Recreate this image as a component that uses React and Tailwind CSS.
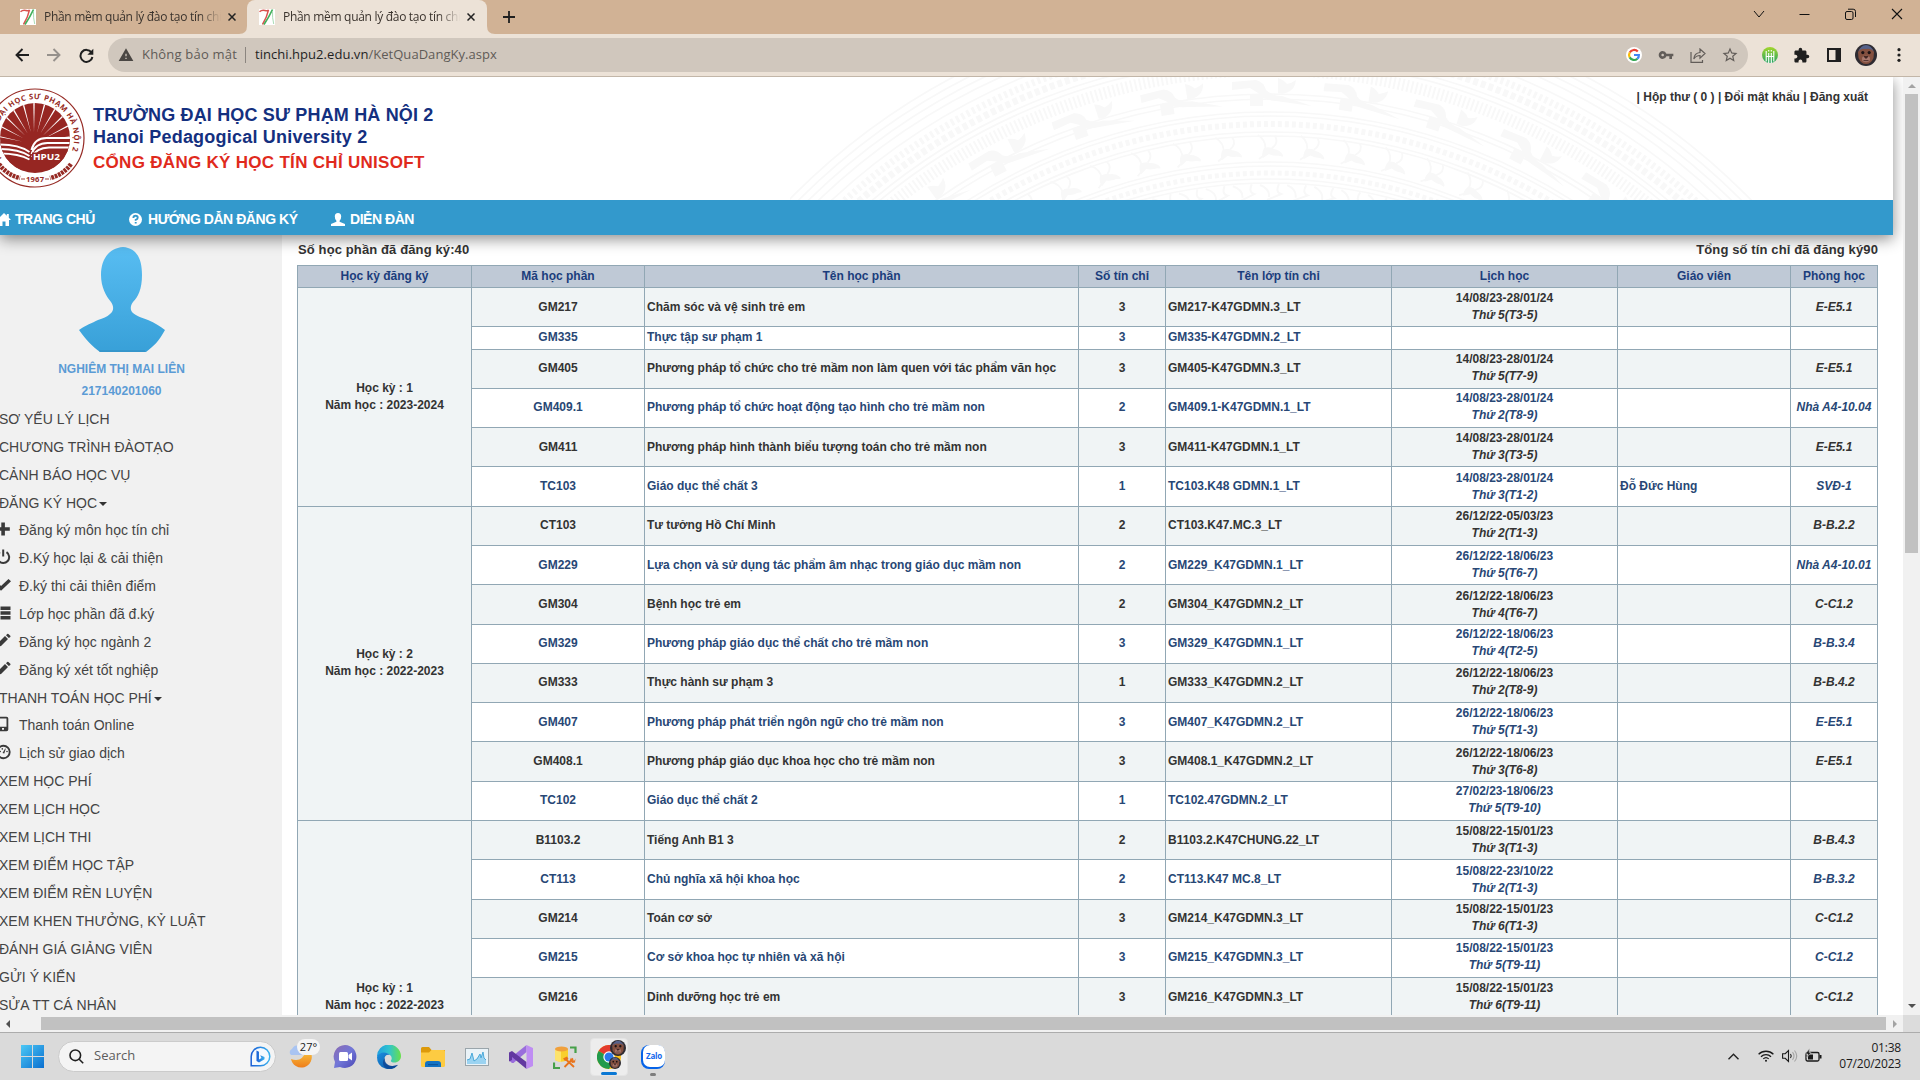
import React from "react";
import { MdExtension, MdVpnKey, MdStarBorder, MdWarning } from "react-icons/md";

const ROWS = [
  { term: ["Học kỳ : 1", "Năm học : 2023-2024"], span: 6, h: 39, code: "GM217", name: "Chăm sóc và vệ sinh trẻ em", cr: 3, cls: "GM217-K47GDMN.3_LT", d: "14/08/23-28/01/24", t: "Thứ 5(T3-5)", room: "E-E5.1" },
  { up: true, h: 23, code: "GM335", name: "Thực tập sư phạm 1", cr: 3, cls: "GM335-K47GDMN.2_LT" },
  { up: true, h: 39, code: "GM405", name: "Phương pháp tổ chức cho trẻ mầm non làm quen với tác phẩm văn học", cr: 3, cls: "GM405-K47GDMN.3_LT", d: "14/08/23-28/01/24", t: "Thứ 5(T7-9)", room: "E-E5.1" },
  { up: true, h: 39, code: "GM409.1", name: "Phương pháp tổ chức hoạt động tạo hình cho trẻ mầm non", cr: 2, cls: "GM409.1-K47GDMN.1_LT", d: "14/08/23-28/01/24", t: "Thứ 2(T8-9)", room: "Nhà A4-10.04" },
  { h: 39, code: "GM411", name: "Phương pháp hình thành biểu tượng toán cho trẻ mầm non", cr: 3, cls: "GM411-K47GDMN.1_LT", d: "14/08/23-28/01/24", t: "Thứ 3(T3-5)", room: "E-E5.1" },
  { h: 40, code: "TC103", name: "Giáo dục thể chất 3", cr: 1, cls: "TC103.K48 GDMN.1_LT", d: "14/08/23-28/01/24", t: "Thứ 3(T1-2)", teacher: "Đỗ Đức Hùng", room: "SVĐ-1" },
  { up: true, term: ["Học kỳ : 2", "Năm học : 2022-2023"], span: 8, h: 39, code: "CT103", name: "Tư tưởng Hồ Chí Minh", cr: 2, cls: "CT103.K47.MC.3_LT", d: "26/12/22-05/03/23", t: "Thứ 2(T1-3)", room: "B-B.2.2" },
  { h: 39, code: "GM229", name: "Lựa chọn và sử dụng tác phẩm âm nhạc trong giáo dục mầm non", cr: 2, cls: "GM229_K47GDMN.1_LT", d: "26/12/22-18/06/23", t: "Thứ 5(T6-7)", room: "Nhà A4-10.01" },
  { h: 40, code: "GM304", name: "Bệnh học trẻ em", cr: 2, cls: "GM304_K47GDMN.2_LT", d: "26/12/22-18/06/23", t: "Thứ 4(T6-7)", room: "C-C1.2" },
  { up: true, h: 39, code: "GM329", name: "Phương pháp giáo dục thể chất cho trẻ mầm non", cr: 3, cls: "GM329_K47GDMN.1_LT", d: "26/12/22-18/06/23", t: "Thứ 4(T2-5)", room: "B-B.3.4" },
  { up: true, h: 39, code: "GM333", name: "Thực hành sư phạm 3", cr: 1, cls: "GM333_K47GDMN.2_LT", d: "26/12/22-18/06/23", t: "Thứ 2(T8-9)", room: "B-B.4.2" },
  { h: 39, code: "GM407", name: "Phương pháp phát triển ngôn ngữ cho trẻ mầm non", cr: 3, cls: "GM407_K47GDMN.2_LT", d: "26/12/22-18/06/23", t: "Thứ 5(T1-3)", room: "E-E5.1" },
  { h: 40, code: "GM408.1", name: "Phương pháp giáo dục khoa học cho trẻ mầm non", cr: 3, cls: "GM408.1_K47GDMN.2_LT", d: "26/12/22-18/06/23", t: "Thứ 3(T6-8)", room: "E-E5.1" },
  { up: true, h: 39, code: "TC102", name: "Giáo dục thể chất 2", cr: 1, cls: "TC102.47GDMN.2_LT", d: "27/02/23-18/06/23", t: "Thứ 5(T9-10)" },
  { term: ["Học kỳ : 1", "Năm học : 2022-2023"], span: 6, h: 39, code: "B1103.2", name: "Tiếng Anh B1 3", cr: 2, cls: "B1103.2.K47CHUNG.22_LT", d: "15/08/22-15/01/23", t: "Thứ 3(T1-3)", room: "B-B.4.3" },
  { h: 40, code: "CT113", name: "Chủ nghĩa xã hội khoa học", cr: 2, cls: "CT113.K47 MC.8_LT", d: "15/08/22-23/10/22", t: "Thứ 2(T1-3)", room: "B-B.3.2" },
  { up: true, h: 39, code: "GM214", name: "Toán cơ sở", cr: 3, cls: "GM214_K47GDMN.3_LT", d: "15/08/22-15/01/23", t: "Thứ 6(T1-3)", room: "C-C1.2" },
  { up: true, h: 39, code: "GM215", name: "Cơ sở khoa học tự nhiên và xã hội", cr: 3, cls: "GM215_K47GDMN.3_LT", d: "15/08/22-15/01/23", t: "Thứ 5(T9-11)", room: "C-C1.2" },
  { h: 39, code: "GM216", name: "Dinh dưỡng học trẻ em", cr: 3, cls: "GM216_K47GDMN.3_LT", d: "15/08/22-15/01/23", t: "Thứ 6(T9-11)", room: "C-C1.2" },
  { h: 157 },
];

const MENU = [
  { t: "SƠ YẾU LÝ LỊCH" },
  { t: "CHƯƠNG TRÌNH ĐÀOTẠO" },
  { t: "CẢNH BÁO HỌC VỤ" },
  { t: "ĐĂNG KÝ HỌC", caret: true },
  { t: "Đăng ký môn học tín chỉ", icon: "plus" },
  { t: "Đ.Ký học lại & cải thiện", icon: "power" },
  { t: "Đ.ký thi cải thiên điểm", icon: "check" },
  { t: "Lớp học phần đã đ.ký", icon: "list" },
  { t: "Đăng ký học ngành 2", icon: "pencil" },
  { t: "Đăng ký xét tốt nghiệp", icon: "pencil" },
  { t: "THANH TOÁN HỌC PHÍ", caret: true },
  { t: "Thanh toán Online", icon: "phone" },
  { t: "Lịch sử giao dịch", icon: "gauge" },
  { t: "XEM HỌC PHÍ" },
  { t: "XEM LỊCH HỌC" },
  { t: "XEM LỊCH THI" },
  { t: "XEM ĐIỂM HỌC TẬP" },
  { t: "XEM ĐIỂM RÈN LUYỆN" },
  { t: "XEM KHEN THƯỞNG, KỶ LUẬT" },
  { t: "ĐÁNH GIÁ GIẢNG VIÊN" },
  { t: "GỬI Ý KIẾN" },
  { t: "SỬA TT CÁ NHÂN" },
];

function MenuIcon({ kind }) {
  const shapes = {
    plus: <path d="M5.300.5h3.600v4.700h4.900v3.600H8.900v4.700H5.300V8.800H.5V5.200h4.800z" />,
    power: (
      <g fill="none" stroke="currentColor" strokeWidth="2">
        <path d="M4 2.200a5.900 5.900 0 1 0 6.500 0" />
        <path d="M7.200-.5v7" />
      </g>
    ),
    check: <path d="M0 8l2.500-2.500L5 8l7.500-7L15 3.300 5 12.800z" />,
    list: <path d="M0 .5h3.500v3.500H0zM4.500.5h10v3.500h-10zM0 5.200h3.500v3.500H0zM4.500 5.200h10v3.500h-10zM0 10h3.500v3.500H0zM4.500 10h10v3.500h-10z" />,
    pencil: <path d="M1 13l1-4 7-7 3 3-7 7zM10 1.200L11.200 0q.6-.4 1.200 0L14.300 1.700q.4.6 0 1.200L12.800 4z" />,
    phone: <path fillRule="evenodd" d="M3.500-.3h7q1.800 0 1.800 1.800v11q0 1.800-1.800 1.800h-7q-1.800 0-1.800-1.800v-11q0-1.800 1.800-1.800zm0 1.800v8.300h7V1.500zM6 11v1.700h2V11z" />,
    gauge: (
      <g>
        <circle cx="7.500" cy="7" r="6.200" fill="none" stroke="currentColor" strokeWidth="1.900" />
        <path d="M6.500 8L9.200 3.400l.6.4L8.300 8.600z" />
        <circle cx="4.200" cy="6.500" r=".8" />
        <circle cx="6.300" cy="3.900" r=".8" />
        <circle cx="11" cy="6.500" r=".8" />
      </g>
    ),
  };
  return (
    <svg className="-mt-[2px] h-[14px] w-[14px] shrink-0 overflow-visible text-[#3a3a3a]" viewBox="0 0 14 14" fill="currentColor">
      {shapes[kind]}
    </svg>
  );
}

function Favicon() {
  return (
    <svg className="h-4 w-4 shrink-0" viewBox="0 0 16 16">
      <rect width="16" height="16" fill="#fff" />
      <path d="M.5 2.800Q3 .5 6 1.500T9.500.8Q8 8 3.500 15.500" fill="none" stroke="#d9534f" strokeWidth="1.500" />
      <path d="M5 15.500Q10 8 13.500.5" fill="none" stroke="#42b05c" strokeWidth="1.700" />
      <path d="M13.500 2q-.3 7 1.200 13" fill="none" stroke="#a9dcb5" strokeWidth="1" />
    </svg>
  );
}

function CloseX() {
  return (
    <svg className="h-2 w-2 shrink-0 text-[#222]" viewBox="0 0 8 8" stroke="currentColor" strokeWidth="1.500">
      <path d="M.5.5l7 7M7.500.5l-7 7" />
    </svg>
  );
}

function TabContent() {
  return (
    <>
      <Favicon />
      <span className="ml-2 w-[177px] overflow-hidden whitespace-nowrap text-[12px] tracking-[-0.3px] text-[#3a332d] [mask-image:linear-gradient(to_right,black_155px,transparent_177px)]">
        Phần mềm quản lý đào tạo tín chỉ
      </span>
      <span className="ml-[7px] flex">
        <CloseX />
      </span>
    </>
  );
}

function TabStrip() {
  return (
    <div className="flex h-[34px] shrink-0 items-start bg-[#d1b295]">
      <div className="flex h-[34px] w-[240px] items-center pl-[20px]">
        <TabContent />
      </div>
      <div className="relative ml-[7px] flex h-[34px] w-[240px] items-center rounded-t-lg bg-[#ece2d7] pl-[12px]">
        <svg className="absolute -left-2 bottom-0 h-2 w-2" viewBox="0 0 8 8" fill="#ece2d7"><path d="M8 0v8H0q8 0 8-8" /></svg>
        <svg className="absolute -right-2 bottom-0 h-2 w-2" viewBox="0 0 8 8" fill="#ece2d7"><path d="M0 0v8h8Q0 8 0 0" /></svg>
        <TabContent />
      </div>
      <svg className="ml-[16px] mt-[11px] h-3 w-3" viewBox="0 0 12 12" stroke="#1f1f1f" strokeWidth="1.800"><path d="M6 0v12M0 6h12" /></svg>
      <div className="ml-auto flex h-7 items-center pr-[17px]">
        <svg className="mr-[34px] h-[12px] w-[12px]" viewBox="0 0 12 12" fill="none" stroke="#111"><path d="M1 3l5 6 5-6" /></svg>
        <svg className="mr-[35px] h-[12px] w-[11px]" viewBox="0 0 11 12" stroke="#111"><path d="M.5 6.500h10" /></svg>
        <svg className="mr-[35px] h-[12px] w-[11px]" viewBox="0 0 11 12" fill="none" stroke="#111"><rect x=".5" y="3.500" width="7.500" height="8" rx="1.500" /><path d="M3 1.200h5.200q2.300 0 2.300 2.300V9" /></svg>
        <svg className="h-[12px] w-[12px]" viewBox="0 0 12 12" stroke="#111" strokeWidth="1.100"><path d="M1 1l10 10M11 1L1 11" /></svg>
      </div>
    </div>
  );
}

function Monkey({ className }) {
  return (
    <svg className={className} viewBox="0 0 22 22">
      <circle cx="11" cy="11" r="11" fill="#2e2b31" />
      <path d="M3 8q2-5 8-5t8 5l-.5 6q-2.500 6-7.500 6t-7.500-6z" fill="#84503f" />
      <path d="M3 8q3-4 8-3 5-1 8 3-3-7-8-7T3 8" fill="#55618a" />
      <circle cx="7.800" cy="8.600" r="1.600" fill="#1c1214" />
      <circle cx="14.200" cy="8.600" r="1.600" fill="#1c1214" />
      <ellipse cx="11" cy="15" rx="4" ry="3.200" fill="#a8776c" />
      <path d="M9 12.500h4l-2 2zM8.500 16.600h5" fill="#3a1f1d" stroke="#3a1f1d" strokeWidth=".8" />
    </svg>
  );
}

function Toolbar() {
  return (
    <div className="flex h-[43px] shrink-0 items-center border-b border-[#c2b6a8] bg-[#ece2d7]">
      <svg className="ml-[15px] h-[14px] w-[14px]" viewBox="0 0 14 14" fill="none" stroke="#1f1f1f" strokeWidth="1.900"><path d="M14 7H1.500M7.500 1L1.500 7l6 6" /></svg>
      <svg className="ml-[18px] h-[14px] w-[14px]" viewBox="0 0 14 14" fill="none" stroke="#96918c" strokeWidth="1.900"><path d="M0 7h12.500M6.500 1l6 6-6 6" /></svg>
      <svg className="ml-[18px] h-[15px] w-[15px]" viewBox="0 0 15 15" fill="none" stroke="#1f1f1f" strokeWidth="2"><path d="M12.400 4.400A6 6 0 1 0 13.400 9" /><path d="M14.300.8v5.900H8.400z" fill="#1f1f1f" stroke="none" /></svg>
      <div className="ml-[14px] flex h-[34px] w-[1640px] items-center rounded-full bg-[#d0c7bd] pl-[10px]">
        <MdWarning className="h-4 w-4 text-[#4a4643]" />
        <span className="ml-[8px] text-[13px] tracking-[0.2px] text-[#5f5b57]">Không bảo mật</span>
        <span className="ml-2 h-4 w-px bg-[#8b857f]" />
        <span className="ml-[9px] whitespace-nowrap text-[13px] tracking-[0.04px] text-[#5f5b57]"><span className="text-[#1f1f1f]">tinchi.hpu2.edu.vn</span>/KetQuaDangKy.aspx</span>
        <div className="ml-auto flex items-center pr-[9px]">
          <svg className="h-4 w-4" viewBox="0 0 16 16" fill="none" strokeWidth="2.200">
            <circle cx="8" cy="8" r="8" fill="#fff" />
            <path d="M11.800 4.600A5 5 0 0 0 3.700 5.600" stroke="#ea4335" />
            <path d="M3.700 5.500a5.200 5.200 0 0 0 0 5" stroke="#fbbc05" />
            <path d="M3.700 10.400a5 5 0 0 0 7.700 1.300" stroke="#34a853" />
            <path d="M11.300 11.800A4.800 4.800 0 0 0 12.900 8H8" stroke="#4285f4" />
          </svg>
          <MdVpnKey className="ml-[16px] h-4 w-4 text-[#625d59]" />
          <svg className="ml-[16px] h-[15px] w-[16px]" viewBox="0 0 16 15" fill="none" stroke="#625d59" strokeWidth="1.200"><path d="M1 4v10.300h11.500V12" /><path d="M3.800 11q.5-6 6.200-6.500V1L15 5.500l-5 4.700V7.500Q6 7.500 3.800 11z" /></svg>
          <MdStarBorder className="ml-[15px] h-[18px] w-[18px] text-[#625d59]" />
        </div>
      </div>
      <svg className="ml-[14px] h-4 w-4" viewBox="0 0 16 16">
        <defs><linearGradient id="ext" x2="0" y2="1"><stop stopColor="#a3d62b" /><stop offset="1" stopColor="#27a363" /></linearGradient></defs>
        <circle cx="8" cy="8" r="8" fill="url(#ext)" />
        <path d="M4.200 4v10.500M6.700 6v10M9.300 6v10M11.800 4v10.500M4 9.500h8M6.700 3v1.500M9.300 3v1.500" stroke="#fff" strokeWidth="1.100" />
      </svg>
      <MdExtension className="ml-[15px] h-[17px] w-[17px] text-[#1f1f1f]" />
      <svg className="ml-[17px] h-[14px] w-[14px]" viewBox="0 0 14 14"><path fill="#1f1f1f" fillRule="evenodd" d="M0 0h14v14H0zm2 2v10h6.500V2z" /></svg>
      <Monkey className="ml-[14px] h-[22px] w-[22px]" />
      <svg className="ml-[20px] h-[14px] w-1" viewBox="0 0 4 14" fill="#1f1f1f"><circle cx="2" cy="1.700" r="1.600" /><circle cx="2" cy="7" r="1.600" /><circle cx="2" cy="12.300" r="1.600" /></svg>
    </div>
  );
}

/* Bronze drum ornament: concentric bands seen from above, centred below the banner. */
function Drum() {
  const cx = 480, cy = 595;
  const at = (deg, r) => `translate(${cx} ${cy}) rotate(${deg}) translate(0 ${-r})`;
  const steps = (n, from, to) => Array.from({ length: n }, (_, i) => from + ((to - from) * i) / (n - 1));
  return (
    <svg className="absolute left-[790px] top-0 h-[123px] w-[970px]" viewBox="0 0 970 123" fill="none" stroke="#f8f8f8">
      {[674, 667, 660, 653, 644, 617, 612, 578, 573, 560, 556, 540, 536, 510, 506, 493, 489].map((r) => (
        <circle key={r} cx={cx} cy={cy} r={r} strokeWidth="1.700" />
      ))}
      <circle cx={cx} cy={cy} r="635" strokeWidth="7" strokeDasharray="3 3" />
      <circle cx={cx} cy={cy} r="625" strokeWidth="7" strokeDasharray="5 3" />
      <circle cx={cx} cy={cy} r="602" strokeWidth="12" strokeDasharray="2 2.500" />
      <circle cx={cx} cy={cy} r="548" strokeWidth="6" strokeDasharray="4 3" />
      <circle cx={cx} cy={cy} r="499" strokeWidth="5" strokeDasharray="4 3" />
      {steps(9, -36, 36).map((a) => (
        <g key={a} transform={at(a, 578)} stroke="none" fill="#f8f8f8">
          <path d="M-38-12l24-2q8 2 10 10 6 6 16 6l30 10-36-5q-14-1-18-8l-8-5-18 2z" />
          <path d="M-20 0h13v12h-13zM8-16q6 2 9 6 5-1 9-4-1 8-6 11-6 4-12 2z" />
        </g>
      ))}
      {steps(15, -32, 32).map((a) => (
        <g key={a} transform={at(a, 524)}>
          <path d="M-12-13q9 6 7 16M5-12q4 7-3 12M-3 5l-8 6M3 5l10 3" strokeWidth="1.800" />
          <path d="M-6 0q6-2 10 1 6 1 9 6-8 2-14-1l-6 4q-2-4 1-10z" fill="#f8f8f8" stroke="none" />
        </g>
      ))}
      {steps(11, -16, 16).map((a) => (
        <path key={a} transform={at(a, 480)} d="M-10-7q10 4 9 12M9-8q-4 8 2 10l-14 6" strokeWidth="2" />
      ))}
    </svg>
  );
}

function Logo() {
  const rays = [-78, -62, -46, -31, -15, 0, 15, 31, 46, 62, 78];
  return (
    <svg className="-ml-[15px] h-[100px] w-[100px] shrink-0" viewBox="0 0 100 100">
      <defs>
        <clipPath id="disc"><circle cx="50" cy="50" r="35" /></clipPath>
        <path id="ring" d="M17.200 71.300A39 39 0 1 1 87.200 61.900" />
      </defs>
      <circle cx="50" cy="50" r="49" fill="#fff" stroke="#962a24" strokeWidth="1.200" />
      <circle cx="50" cy="50" r="35" fill="#962622" />
      <g clipPath="url(#disc)">
        {rays.map((a) => (
          <path key={a} d="M0-12L-.8-44H.8z" fill="#fff" transform={`translate(49 56) rotate(${a})`} />
        ))}
        <path d="M14 53.500q22 0 31 7 3-10 17-12h24v34H14z" fill="#962622" />
        <g fill="none" stroke="#fff" strokeWidth="2">
          <path d="M15 56.500q19 0 29.500 7.500M15 61q19 0 29.500 7M15 65.500q19 0 29.500 6" />
          <path d="M46.500 62q3-12 15-12H86M46.500 66q4-11 16-11H86M47 69q4-9 17-9.500h22" />
        </g>
      </g>
      <path d="M47 64.500h30v8H47z" fill="#962622" />
      <text x="48" y="71.600" fontSize="9.300" fontWeight="700" fontFamily="Open Sans, sans-serif" fill="#fff" textLength="27" lengthAdjust="spacingAndGlyphs">HPU2</text>
      <text fontSize="7.600" fontWeight="700" fontFamily="Open Sans, sans-serif" fill="#962a24">
        <textPath href="#ring" textLength="157">TRƯỜNG ĐẠI HỌC SƯ PHẠM HÀ NỘI 2</textPath>
      </text>
      <g fill="none" stroke="#962a24" strokeWidth="4.500" strokeDasharray="2.800 .8">
        <path d="M14 76q8 11 21 14M86 76q-8 11-21 14" />
      </g>
      <path d="M36 91h4M60 91h4" stroke="#962a24" strokeWidth=".9" />
      <text x="41" y="93.700" fontSize="7.600" fontWeight="700" fontFamily="Open Sans, sans-serif" fill="#962a24" textLength="18">1967</text>
    </svg>
  );
}

function Header() {
  return (
    <header className="relative z-10 w-[1893px] shrink-0 bg-white shadow-[0_4px_14px_rgba(0,0,0,0.45)]">
      <div className="relative flex h-[123px] overflow-hidden">
        <Drum />
        <div className="relative flex pt-[11px]">
          <Logo />
          <div className="ml-[8px] whitespace-nowrap pt-[16px] font-bold text-[#14307f]">
            <div className="h-[22px] text-[18px] leading-[22px] tracking-[0.17px]">TRƯỜNG ĐẠI HỌC SƯ PHẠM HÀ NỘI 2</div>
            <div className="h-[23px] text-[18px] leading-[23px] tracking-[0.21px]">Hanoi Pedagogical University 2</div>
            <div className="h-[27px] text-[17px] leading-[28px] tracking-[0.3px] text-[#e02a1c]">CỔNG ĐĂNG KÝ HỌC TÍN CHỈ UNISOFT</div>
          </div>
        </div>
        <div className="relative mt-[12px] mr-[25px] ml-auto text-[12px] leading-4 font-bold text-[#333]">| Hộp thư ( 0 ) | Đổi mật khẩu | Đăng xuất</div>
      </div>
      <nav className="flex h-[35px] items-center bg-[#3399cc] pt-[3px] text-[14px] font-bold tracking-[-0.46px] text-white">
        <svg className="-ml-[3px] h-[13px] w-[14px]" viewBox="0 0 14 13" fill="#fff"><path d="M7 0l2.800 2.800V1h2v3.800L14 7h-2v6H8.500V8.500h-3V13H2V7H0z" /></svg>
        <span className="ml-[4px] w-[114px]">TRANG CHỦ</span>
        <svg className="h-[13px] w-[13px]" viewBox="0 0 13 13"><circle cx="6.500" cy="6.500" r="6.500" fill="#fff" /><path d="M4.400 5q0-2.200 2.200-2.200 2.100 0 2.100 1.900 0 1.300-2 2.100v1M6.700 9v1.500" fill="none" stroke="#3399cc" strokeWidth="1.900" /></svg>
        <span className="ml-[6px] w-[183px]">HƯỚNG DẪN ĐĂNG KÝ</span>
        <svg className="h-[13px] w-[14px]" viewBox="0 0 14 13" fill="#fff"><path d="M7 0q3.200 0 3.200 3.500 0 2.800-1.600 4.200v1L14 11v2H0v-2l5.400-2.300v-1Q3.800 6.300 3.800 3.500 3.800 0 7 0z" /></svg>
        <span className="ml-[5px]">DIỄN ĐÀN</span>
      </nav>
    </header>
  );
}

function Sidebar() {
  return (
    <aside className="h-full w-[282px] shrink-0 overflow-hidden bg-[#f1f1f1]">
      <div className="flex w-[243px] flex-col items-center pt-[12px]">
        <svg className="h-[106px] w-[86px]" viewBox="0 0 86 106">
          <defs><linearGradient id="person" x2="0" y2="1"><stop stopColor="#58bdf2" /><stop offset="1" stopColor="#38a0d8" /></linearGradient></defs>
          <path d="M44 0C58 1 63 12 63 28c0 14-4 22-9 27-3 4-3 8 0 11 3 3 10 5 15 7 7 3 12 6 17 10-6 11-11 16-19 22H21C13 99 7 93 0 83c7-5 13-7 19-10 5-2 9-3 12-6 4-3 4-8 1-12-5-6-10-15-10-27C22 12 30 1 44 0z" fill="url(#person)" />
          <path d="M20 104h46" stroke="#2f7faf" strokeWidth="1" opacity=".6" />
        </svg>
        <div className="mt-[5px] text-[12px] leading-[22px] font-bold text-[#5b9bd5]">NGHIÊM THỊ MAI LIÊN</div>
        <div className="text-[12px] leading-[22px] font-bold text-[#5b9bd5]">217140201060</div>
      </div>
      <ul className="mt-[3px] text-[14px] text-[#444]">
        {MENU.map((m) =>
          m.icon ? (
            <li key={m.t} className="-ml-[4px] flex h-7 items-center gap-[9px] whitespace-nowrap"><MenuIcon kind={m.icon} />{m.t}</li>
          ) : (
            <li key={m.t} className={m.caret ? "-ml-px flex h-[27px] items-center whitespace-nowrap leading-7" : "-ml-px flex h-7 items-center whitespace-nowrap"}>
              {m.t}
              {m.caret && <svg className="mt-[3px] ml-[2px] h-1 w-2" viewBox="0 0 8 4" fill="#333"><path d="M0 0h8L4 4z" /></svg>}
            </li>
          )
        )}
      </ul>
    </aside>
  );
}

function Grades() {
  const base = "border border-[#91a7b4] px-[2px] pt-0 align-middle";
  return (
    <section className="w-[1581px] pt-[4px] font-bold">
      <div className="flex h-[26px] justify-between pl-px text-[13px] leading-[22px] tracking-[0.12px] text-[#333]">
        <span>Số học phần đã đăng ký:40</span>
        <span>Tổng số tín chỉ đã đăng ký90</span>
      </div>
      <table className="w-[1581px] table-fixed border-collapse text-[12px] leading-[17px]">
        <colgroup>
          <col className="w-[174px]" /><col className="w-[173px]" /><col className="w-[434px]" /><col className="w-[87px]" />
          <col className="w-[226px]" /><col className="w-[226px]" /><col className="w-[173px]" /><col className="w-[87px]" />
        </colgroup>
        <thead>
          <tr className="h-[22px] bg-[#bfc9d6] text-[#1b3d7c]">
            {["Học kỳ đăng ký", "Mã học phần", "Tên học phần", "Số tín chỉ", "Tên lớp tín chỉ", "Lịch học", "Giáo viên", "Phòng học"].map((h) => (
              <th key={h} className={`${base} pb-0`}>{h}</th>
            ))}
          </tr>
        </thead>
        <tbody>
          {ROWS.map((r, i) => {
            const cell = `${base} ${r.up ? "pb-[2px]" : "pb-0"}`;
            return (
              <tr key={i} style={{ height: r.h }} className={i % 2 ? "bg-white text-[#284775]" : "bg-[#f0f4f5] text-[#333]"}>
                {r.term && (
                  <td rowSpan={r.span} className={`${cell} bg-[#f0f4f5] text-center text-[#333]`}>{r.term[0]}<br />{r.term[1]}</td>
                )}
                <td className={`${cell} text-center`}>{r.code}</td>
                <td className={cell}>{r.name}</td>
                <td className={`${cell} text-center`}>{r.cr}</td>
                <td className={cell}>{r.cls}</td>
                <td className={`${cell} text-center`}>{r.d && <>{r.d}<br /><i>{r.t}</i></>}</td>
                <td className={cell}>{r.teacher}</td>
                <td className={`${cell} whitespace-nowrap text-center italic`}>{r.room}</td>
              </tr>
            );
          })}
        </tbody>
      </table>
    </section>
  );
}

function Taskbar() {
  return (
    <footer className="flex h-[48px] shrink-0 items-center border-t border-[#acacac] bg-[#dadada]">
      <svg className="ml-[21px] h-[23px] w-[23px]" viewBox="0 0 23 23">
        <defs><linearGradient id="win" x2="1" y2="1"><stop stopColor="#4cc8f5" /><stop offset="1" stopColor="#0a6fd0" /></linearGradient></defs>
        <path fill="url(#win)" d="M0 0h11v11H0zM12 0h11v11H12zM0 12h11v11H0zM12 12h11v11H12z" />
      </svg>
      <div className="-mt-px ml-[14px] flex h-[31px] w-[218px] items-center rounded-full border border-[#cbcbcb] bg-[#f4f4f4] pl-[10px]">
        <svg className="h-[15px] w-[15px]" viewBox="0 0 15 15" fill="none" stroke="#1f1f1f" strokeWidth="1.600"><circle cx="6.300" cy="6.300" r="5.300" /><path d="M10.200 10.200l4 4" /></svg>
        <span className="ml-[10px] text-[13px] text-[#5c5c5c]">Search</span>
        <svg className="ml-auto mr-[4px] h-[21px] w-[21px]" viewBox="0 0 21 21">
          <defs><linearGradient id="bing" x2="1"><stop stopColor="#1b5fd6" /><stop offset="1" stopColor="#39b2ee" /></linearGradient></defs>
          <path d="M1.200 19.800V10.500a9.300 9.300 0 1 1 9.300 9.300z" fill="#f4f9fe" stroke="url(#bing)" strokeWidth="1.500" />
          <path d="M6.500 4.500L9 5.700v7.800l2.500-1.500-1.300-2.700 4.300 1.600v2.300L9 16.500l-2.500-1.400z" fill="url(#bing)" />
        </svg>
      </div>
      <div className="relative ml-[13px] h-[30px] w-[32px]">
        <svg className="h-[30px] w-[32px]" viewBox="0 0 32 30">
          <defs><linearGradient id="moon" x2="0" y2="1"><stop stopColor="#f9c440" /><stop offset="1" stopColor="#ee7d1a" /></linearGradient></defs>
          <path d="M22 11a10.500 10.500 0 1 1-20 6q11 4 15-8z" fill="url(#moon)" />
          <path d="M2 13a3.500 3.500 0 0 1 1-6q3-6 8-2l2 8z" fill="#a9c4f2" />
        </svg>
        <span className="absolute -top-[3px] left-[8px] flex h-4 w-[23px] items-center justify-center rounded-full bg-[#f5f5f5] text-[11px] leading-none text-[#222]">27°</span>
      </div>
      <svg className="ml-[12px] h-[23px] w-[24px]" viewBox="0 0 24 23">
        <defs><linearGradient id="chat" x2="1" y2="1"><stop stopColor="#8d6bb0" /><stop offset=".5" stopColor="#7177d8" /><stop offset="1" stopColor="#4b46b4" /></linearGradient></defs>
        <path d="M12 0a11.500 11.500 0 1 1-5 21.900L1 23l1-6A11.500 11.500 0 0 1 12 0z" fill="url(#chat)" />
        <rect x="6" y="7" width="9" height="9" rx="1.500" fill="#fff" /><path d="M15.500 10l3.500-2.500v8L15.500 13z" fill="#fff" />
      </svg>
      <svg className="ml-[20px] h-6 w-6" viewBox="0 0 24 24">
        <defs>
          <linearGradient id="edgeTop" x2="1"><stop stopColor="#1f9fe0" /><stop offset=".5" stopColor="#30c3cf" /><stop offset="1" stopColor="#69e04a" /></linearGradient>
          <linearGradient id="edgeLow" x2="1" y2="1"><stop stopColor="#1a8fe0" /><stop offset="1" stopColor="#0a4f9c" /></linearGradient>
        </defs>
        <path d="M0 12A12 12 0 0 1 24 11c0 4-3 6.500-6.500 6.500-3 0-4-1-3.500-2 1-1.500 1-3.500-.5-5C10 7 3 7 0 12z" fill="url(#edgeTop)" />
        <path d="M0 12c1.500-5.500 9.500-6 13-2-4-1-6 2-5.500 5.500.8 5 7 7 13.500 4.500A12 12 0 0 1 0 12z" fill="url(#edgeLow)" />
        <path d="M8 13c-1 6 5 10 13 6.800-4 4.500-9.500 4.700-12.500 3C5 20.500 5.500 15 8 13z" fill="#0d3f8f" opacity=".7" />
      </svg>
      <svg className="ml-[20px] h-[22px] w-6" viewBox="0 0 24 22">
        <path d="M0 2.500Q0 1 1.500 1H8l2.500 3H24v8H0z" fill="#dd9a0b" />
        <path d="M0 6.500h8L10.500 4H22.500Q24 4 24 5.500v14q0 1.500-1.500 1.500h-21Q0 21 0 19.500z" fill="#fdcb42" />
        <path d="M4 21v-3q0-3 3-3h10q3 0 3 3v3z" fill="#1272c4" /><path d="M7 18h10v1.200H7z" fill="#0b559c" />
      </svg>
      <svg className="ml-[20px] h-[18px] w-6" viewBox="0 0 24 18">
        <rect x=".5" y=".5" width="23" height="17" fill="#eaf3f8" stroke="#9aa5ab" />
        <path d="M2 16v-4l3-1 2-6 2 8 3-2 3-5 1 4 2-6 1 6 2 2v4z" fill="#9bd3f1" /><path d="M2 12l3-1 2-6 2 8 3-2 3-5 1 4 2-6 1 6 2 2" fill="none" stroke="#4aa9da" />
      </svg>
      <svg className="ml-[20px] h-6 w-6" viewBox="0 0 24 24">
        <path d="M17.500 0v7L4.500 18 3 18l-3-2.500V14z" fill="#9a6ddc" />
        <path d="M0 7.500L3 6l14.500 11v7L3 12v3L0 16.500z" fill="#6238a0" />
        <path d="M17.500 0L24 3v18l-6.500 3z" fill="#bf8df3" />
      </svg>
      <svg className="ml-[20px] h-6 w-6" viewBox="0 0 24 24">
        <path d="M2 4v11q6 3.500 13 0V4z" fill="#f9cf2e" /><path d="M2 4v11q3 2 6 2V4z" fill="#fde36c" />
        <ellipse cx="8.500" cy="4" rx="6.500" ry="2.500" fill="#f0a03c" />
        <path d="M17 2.500h5.500V8M1 17.500V23h6" fill="none" stroke="#46a049" strokeWidth="2.200" />
        <path d="M12.500 14l8.500 8M20 13.500l-8.500 8.500" stroke="#e8741c" strokeWidth="1.800" /><path d="M10 13.500l4-2 1.500 2.500-3.500 2zM18 12.500l1 2.500 2.500.5 1-2-.5 4-3 .5-2-3z" fill="#e8741c" />
      </svg>
      <div className="relative ml-[13px] flex h-[38px] w-[38px] items-center justify-center rounded-[4px] border border-[#e4e4e4] bg-[#ededed]">
        <svg className="h-6 w-6" viewBox="0 0 24 24">
          <circle cx="12" cy="12" r="12" fill="#fbc117" />
          <path d="M12 12L1.600 6A12 12 0 0 1 22.400 6z" fill="#e33b2e" /><path d="M12 12L1.600 6A12 12 0 0 0 12 24l5.200-9z" fill="#229a4c" />
          <circle cx="12" cy="12" r="5.700" fill="#fff" /><circle cx="12" cy="12" r="4.500" fill="#2a78ea" />
        </svg>
        <Monkey className="absolute top-[1px] left-[19px] h-4 w-4" />
        <Monkey className="absolute top-[18px] left-[18px] h-3 w-3" />
        <span className="absolute bottom-0 left-[10px] h-[3px] w-4 rounded-full bg-[#0a78d4]" />
      </div>
      <div className="relative ml-[13px] flex h-[38px] w-6 items-center">
        <div className="h-6 w-6 rounded-[8px] bg-[#0563e8] pb-[2px] pl-[2px]">
          <div className="flex h-[22px] items-center justify-center rounded-[7px] bg-white text-[8px] font-bold tracking-[-0.2px] text-[#1268ec]">Zalo</div>
        </div>
        <span className="absolute bottom-0 left-[9px] h-[3px] w-[6px] rounded-full bg-[#7e7e7e]" />
      </div>
      <div className="ml-auto flex items-center pr-[19px]">
        <svg className="-mt-px h-[7px] w-[11px]" viewBox="0 0 11 7" fill="none" stroke="#222" strokeWidth="1.400"><path d="M.5 6.200l5-5 5 5" /></svg>
        <svg className="-mt-[2px] ml-[19px] h-3 w-4" viewBox="0 0 16 12" fill="none" stroke="#1a1a1a" strokeWidth="1.300"><path d="M.6 4.300a10.500 10.500 0 0 1 14.800 0M3 6.700a7 7 0 0 1 10 0M5.300 8.900a3.900 3.900 0 0 1 5.400 0" /><circle cx="8" cy="10.800" r="1" fill="#1a1a1a" stroke="none" /></svg>
        <svg className="-mt-px ml-[8px] h-[14px] w-4" viewBox="0 0 16 14" fill="none" stroke="#1a1a1a" strokeWidth="1.100"><path d="M.6 4.700h2.600L6.500 1.500v11L3.200 9.300H.6z" /><path d="M8.500 5q1.500 2 0 4" /><path d="M10.500 3.200q3 3.800 0 7.600M12.500 1.500q4.500 5.500 0 11" stroke="#a5a5a5" /></svg>
        <svg className="-mt-[3px] ml-[7px] h-[13px] w-[17px] overflow-visible" viewBox="0 0 17 13"><rect x="1" y="3.500" width="13" height="8.500" rx="1.500" fill="none" stroke="#1a1a1a" strokeWidth="1.300" /><path d="M3 5.500h5v5H3zM14.500 6H16.500v3.500h-2z" fill="#1a1a1a" /><path d="M4.500-.5L.5 5H3L2 8.500 6 3.500H4z" fill="#1a1a1a" stroke="#dadada" strokeWidth=".5" /></svg>
        <div className="-mt-px ml-[15px] w-[64px] text-right text-[12px] leading-4 tracking-[-0.2px] text-[#1a1a1a]">01:38<br />07/20/2023</div>
      </div>
    </footer>
  );
}

export default function App() {
  return (
    <div className="flex h-[1080px] w-[1920px] flex-col overflow-hidden bg-white font-['Open_Sans','Noto_Sans',sans-serif]">
      <TabStrip />
      <Toolbar />
      <main className="flex h-[938px] shrink-0">
        <div className="flex w-[1903px] flex-col overflow-hidden font-['Liberation_Sans',Arial,sans-serif]">
          <Header />
          <div className="flex min-h-0 flex-1 gap-[15px] overflow-hidden">
            <Sidebar />
            <Grades />
          </div>
        </div>
        <div className="flex w-[17px] flex-col items-center bg-[#f1f1f1]">
          <svg className="mt-[7px] h-1 w-2" viewBox="0 0 8 4" fill="#a3a3a3"><path d="M0 4l4-4 4 4z" /></svg>
          <div className="mt-[6px] h-[459px] w-[13px] bg-[#c1c1c1]" />
          <svg className="mt-auto mb-[7px] h-1 w-2" viewBox="0 0 8 4" fill="#505050"><path d="M0 0h8L4 4z" /></svg>
        </div>
      </main>
      <div className="flex h-[17px] shrink-0 items-center bg-[#f1f1f1]">
        <svg className="ml-[6px] h-2 w-1" viewBox="0 0 4 8" fill="#505050"><path d="M4 0v8L0 4z" /></svg>
        <div className="ml-[31px] h-[13px] w-[1845px] bg-[#c1c1c1]" />
        <svg className="ml-[7px] h-2 w-1" viewBox="0 0 4 8" fill="#a3a3a3"><path d="M0 0v8l4-4z" /></svg>
        <div className="ml-auto h-[17px] w-[17px] bg-[#dcdcdc]" />
      </div>
      <Taskbar />
    </div>
  );
}
